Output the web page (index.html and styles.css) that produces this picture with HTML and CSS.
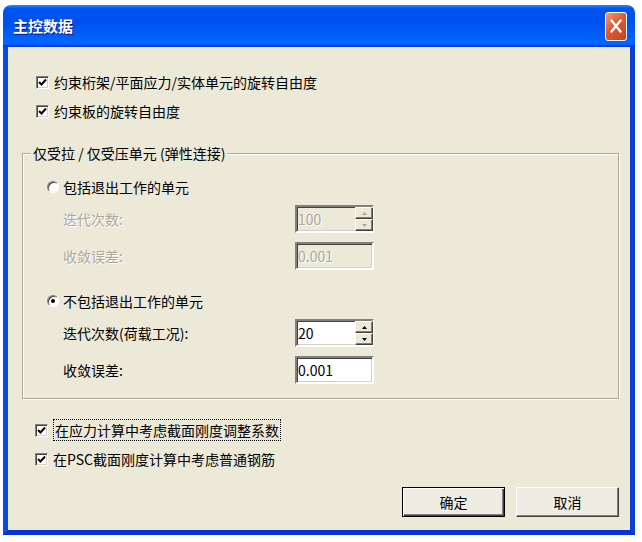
FILE: index.html
```html
<!DOCTYPE html>
<html lang="zh">
<head>
  <meta charset="UTF-8" />
  <title>主控数据</title>
  <link rel="stylesheet" href="styles.css">
</head>
<body>
  <div class="window">
    <div class="titlebar">
      <span class="title">主控数据</span>
      <span class="close">
        <svg width="12" height="14" viewBox="0 0 12 14"><path d="M1.5 1.5 L10.5 12.5 M10.5 1.5 L1.5 12.5" stroke="#fff" stroke-width="2.4" stroke-linecap="round" fill="none"/></svg>
      </span>
    </div>

    <div class="client">
      <div class="check-row">
        <span class="checkbox"><svg width="9" height="9" viewBox="0 0 9 9"><path d="M1 4 L3.5 6.5 L8 1.5" stroke="#000" stroke-width="2" fill="none"/></svg></span>
        <span>约束桁架/平面应力/实体单元的旋转自由度</span>
      </div>
      <div class="check-row next">
        <span class="checkbox"><svg width="9" height="9" viewBox="0 0 9 9"><path d="M1 4 L3.5 6.5 L8 1.5" stroke="#000" stroke-width="2" fill="none"/></svg></span>
        <span>约束板的旋转自由度</span>
      </div>

      <div class="group">
        <span class="legend">仅受拉 / 仅受压单元 (弹性连接)</span>

        <div class="radio-row">
          <span class="radio"></span>
          <span>包括退出工作的单元</span>
        </div>
        <div class="field disabled first">
          <span class="field-label">迭代次数:</span>
          <span class="input">
            <span class="value">100</span>
            <span class="spin">
              <span class="spin-btn"><svg width="5" height="3" viewBox="0 0 5 3"><path d="M2.5 0 L5 3 L0 3 Z" fill="#aca899"/></svg></span>
              <span class="spin-btn"><svg width="5" height="3" viewBox="0 0 5 3"><path d="M0 0 L5 0 L2.5 3 Z" fill="#aca899"/></svg></span>
            </span>
          </span>
        </div>
        <div class="field disabled">
          <span class="field-label">收敛误差:</span>
          <span class="input"><span class="value">0.001</span></span>
        </div>

        <div class="radio-row second">
          <span class="radio checked"></span>
          <span>不包括退出工作的单元</span>
        </div>
        <div class="field first">
          <span class="field-label">迭代次数(荷载工况):</span>
          <span class="input">
            <span class="value">20</span>
            <span class="spin">
              <span class="spin-btn"><svg width="5" height="3" viewBox="0 0 5 3"><path d="M2.5 0 L5 3 L0 3 Z" fill="#000"/></svg></span>
              <span class="spin-btn"><svg width="5" height="3" viewBox="0 0 5 3"><path d="M0 0 L5 0 L2.5 3 Z" fill="#000"/></svg></span>
            </span>
          </span>
        </div>
        <div class="field">
          <span class="field-label">收敛误差:</span>
          <span class="input"><span class="value">0.001</span></span>
        </div>
      </div>

      <div class="check-row lower">
        <span class="checkbox"><svg width="9" height="9" viewBox="0 0 9 9"><path d="M1 4 L3.5 6.5 L8 1.5" stroke="#000" stroke-width="2" fill="none"/></svg></span>
        <span class="focused">在应力计算中考虑截面刚度调整系数</span>
      </div>
      <div class="check-row lower next">
        <span class="checkbox"><svg width="9" height="9" viewBox="0 0 9 9"><path d="M1 4 L3.5 6.5 L8 1.5" stroke="#000" stroke-width="2" fill="none"/></svg></span>
        <span>在PSC截面刚度计算中考虑普通钢筋</span>
      </div>

      <div class="buttons">
        <button class="btn default">确定</button>
        <button class="btn">取消</button>
      </div>
    </div>
  </div>
</body>
</html>
```

FILE: styles.css
```css
* {
  box-sizing: border-box;
}

body {
  margin: 0;
  padding: 5px 0 0 3px;
  background: #fff;
  font-family: "Noto Sans CJK SC", "Liberation Sans", sans-serif;
  font-size: 14px;
  line-height: 18px;
  color: #000;
}

.window {
  width: 632px;
  height: 530px;
  display: flex;
  flex-direction: column;
}

/* title bar */
.titlebar {
  height: 42px;
  display: flex;
  align-items: center;
  justify-content: space-between;
  padding: 0 8px 0 10px;
  border-radius: 8px 8px 0 0;
  background: linear-gradient(#0997ff, #0053ee 8%, #0050ee 40%, #0066ff 88%, #0066ff 93%, #005bff 95%, #003dd7 96%, #003dd7);
}

.title {
  color: #fff;
  font-weight: bold;
  font-size: 15px;
  text-shadow: 1px 1px #0f1089;
}

.close {
  width: 22px;
  height: 29px;
  display: flex;
  align-items: center;
  justify-content: center;
  border: 1px solid #fff;
  border-radius: 3px;
  background: linear-gradient(135deg, #f09a7c, #de5a32 45%, #c7401d);
}

/* client area */
.client {
  flex: 1;
  display: flex;
  flex-direction: column;
  padding: 23px 11px 13px 14px;
  background: #ece9d8;
  border: 5px solid #0831d9;
  border-top: none;
  border-left-color: #0a4be6;
  border-right-color: #0a3fd8;
}

.check-row {
  height: 24px;
  display: flex;
  align-items: center;
  gap: 5px;
  padding-left: 14px;
}

.check-row.next {
  margin-top: 5px;
}

.check-row.lower {
  margin-top: 19px;
  padding-left: 13px;
}

.check-row.lower.next {
  margin-top: 5px;
}

.checkbox {
  width: 13px;
  height: 13px;
  display: flex;
  align-items: center;
  justify-content: center;
  background: #fff;
  border: 1px solid;
  border-color: #808080 #fff #fff #808080;
  box-shadow: inset 1px 1px #404040, inset -1px -1px #d4d0c8;
}

.focused {
  border: 1px dotted #000;
  padding: 1px 1px 1px 1px;
}

/* group box */
.group {
  position: relative;
  height: 246px;
  margin-top: 30px;
  padding: 21px 0 0 24px;
  border: 1px solid #aca899;
  box-shadow: 1px 1px #fff, inset 1px 1px #fff;
}

.legend {
  position: absolute;
  top: -10px;
  left: 8px;
  padding: 0 2px;
  background: #ece9d8;
}

.radio-row {
  height: 24px;
  display: flex;
  align-items: center;
  gap: 4px;
}

.radio-row.second {
  margin-top: 19px;
}

.radio {
  width: 12px;
  height: 12px;
  display: flex;
  align-items: center;
  justify-content: center;
  border-radius: 50%;
  background: #fff;
  border: 1px solid;
  border-color: #808080 #fff #fff #808080;
  box-shadow: inset 1px 1px #404040;
}

.radio.checked::after {
  content: "";
  width: 4px;
  height: 4px;
  border-radius: 50%;
  background: #000;
}

.field {
  height: 28px;
  display: flex;
  align-items: center;
  margin-top: 9px;
  padding-left: 16px;
}

.field.first {
  margin-top: 6px;
}

.field.disabled {
  color: #aca899;
  text-shadow: 1px 1px #fff;
}

.field-label {
  width: 232px;
}

.input {
  width: 79px;
  height: 28px;
  display: flex;
  align-items: center;
  justify-content: space-between;
  background: #fff;
  border: 2px solid;
  border-color: #808080 #fff #fff #808080;
  box-shadow: inset 1px 1px #404040, inset -1px -1px #d4d0c8;
  padding-left: 1px;
}

.field.disabled .input {
  background: #ece9d8;
}

.value {
  font-size: 14px;
}

.spin {
  width: 18px;
  height: 24px;
  display: flex;
  flex-direction: column;
  margin-right: -1px;
}

.spin-btn {
  flex: 1;
  display: flex;
  align-items: center;
  justify-content: center;
  background: #ece9d8;
  border: 1px solid;
  border-color: #fff #404040 #404040 #fff;
  box-shadow: inset -1px -1px #808080;
}

/* buttons */
.buttons {
  display: flex;
  justify-content: flex-end;
  gap: 11px;
  margin-top: 16px;
}

.btn {
  width: 103px;
  height: 30px;
  font-family: inherit;
  font-size: 14px;
  color: #000;
  background: #efede3;
  border: 1px solid;
  border-color: #fff #404040 #404040 #fff;
  box-shadow: inset -1px -1px #808080;
  padding: 0;
}

.btn.default {
  border: 1px solid #000;
  box-shadow: inset 1px 1px #fff, inset -1px -1px #404040, inset -2px -2px #808080;
}
```
